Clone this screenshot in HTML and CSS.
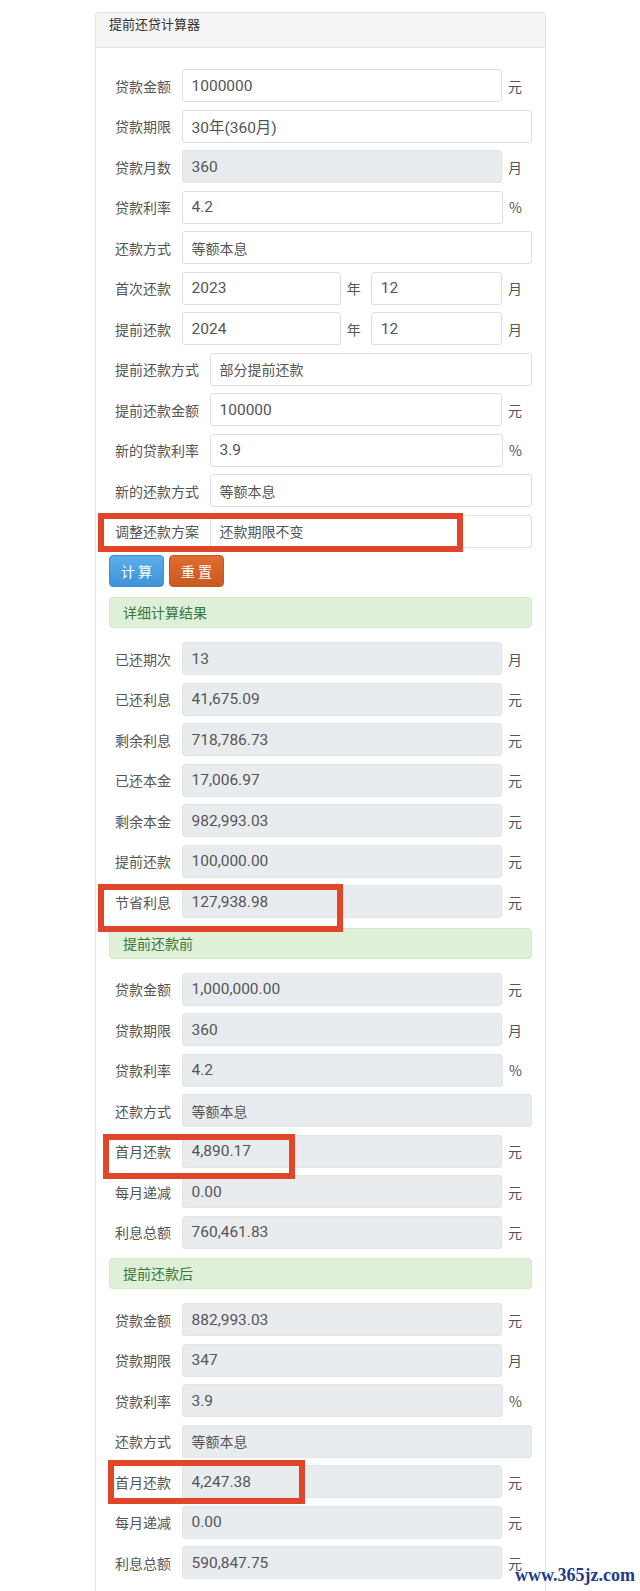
FILE: index.html
```html
<!DOCTYPE html>
<html lang="zh-CN">
  <head>
    <meta charset="UTF-8" />
    <meta name="viewport" content="width=device-width, initial-scale=1.0" />
    <title>提前还贷计算器</title>
    <link rel="stylesheet" href="styles.css">
  </head>
  <body>
    <div class="page">
      <div class="panel">
        <div class="panel-heading">提前还贷计算器</div>
        <div class="panel-body">
          <div class="row"><label class="lbl">贷款金额</label><input class="field" value="1000000"><span class="unit">元</span></div>
          <div class="row"><label class="lbl">贷款期限</label><input class="field" value="30年(360月)"></div>
          <div class="row"><label class="lbl">贷款月数</label><input class="field locked" value="360" readonly><span class="unit">月</span></div>
          <div class="row"><label class="lbl">贷款利率</label><input class="field" value="4.2"><span class="unit">%</span></div>
          <div class="row"><label class="lbl">还款方式</label><input class="field cjk" value="等额本息"></div>
          <div class="row"><label class="lbl">首次还款</label><input class="field year" value="2023"><span class="unit">年</span><input class="field month" value="12"><span class="unit">月</span></div>
          <div class="row"><label class="lbl">提前还款</label><input class="field year" value="2024"><span class="unit">年</span><input class="field month" value="12"><span class="unit">月</span></div>
          <div class="row"><label class="lbl">提前还款方式</label><input class="field cjk" value="部分提前还款"></div>
          <div class="row"><label class="lbl">提前还款金额</label><input class="field" value="100000"><span class="unit">元</span></div>
          <div class="row"><label class="lbl">新的贷款利率</label><input class="field" value="3.9"><span class="unit">%</span></div>
          <div class="row"><label class="lbl">新的还款方式</label><input class="field cjk" value="等额本息"></div>
          <div class="row"><label class="lbl">调整还款方案</label><input class="field cjk" value="还款期限不变"></div>

          <div class="btns">
            <button class="btn btn-calc">计 算</button>
            <button class="btn btn-reset">重 置</button>
          </div>

          <div class="alert">详细计算结果</div>
          <div class="row"><label class="lbl">已还期次</label><input class="field locked" value="13" readonly><span class="unit">月</span></div>
          <div class="row"><label class="lbl">已还利息</label><input class="field locked" value="41,675.09" readonly><span class="unit">元</span></div>
          <div class="row"><label class="lbl">剩余利息</label><input class="field locked" value="718,786.73" readonly><span class="unit">元</span></div>
          <div class="row"><label class="lbl">已还本金</label><input class="field locked" value="17,006.97" readonly><span class="unit">元</span></div>
          <div class="row"><label class="lbl">剩余本金</label><input class="field locked" value="982,993.03" readonly><span class="unit">元</span></div>
          <div class="row"><label class="lbl">提前还款</label><input class="field locked" value="100,000.00" readonly><span class="unit">元</span></div>
          <div class="row"><label class="lbl">节省利息</label><input class="field locked" value="127,938.98" readonly><span class="unit">元</span></div>

          <div class="alert">提前还款前</div>
          <div class="row"><label class="lbl">贷款金额</label><input class="field locked" value="1,000,000.00" readonly><span class="unit">元</span></div>
          <div class="row"><label class="lbl">贷款期限</label><input class="field locked" value="360" readonly><span class="unit">月</span></div>
          <div class="row"><label class="lbl">贷款利率</label><input class="field locked" value="4.2" readonly><span class="unit">%</span></div>
          <div class="row"><label class="lbl">还款方式</label><input class="field locked cjk" value="等额本息" readonly></div>
          <div class="row"><label class="lbl">首月还款</label><input class="field locked" value="4,890.17" readonly><span class="unit">元</span></div>
          <div class="row"><label class="lbl">每月递减</label><input class="field locked" value="0.00" readonly><span class="unit">元</span></div>
          <div class="row"><label class="lbl">利息总额</label><input class="field locked" value="760,461.83" readonly><span class="unit">元</span></div>

          <div class="alert">提前还款后</div>
          <div class="row"><label class="lbl">贷款金额</label><input class="field locked" value="882,993.03" readonly><span class="unit">元</span></div>
          <div class="row"><label class="lbl">贷款期限</label><input class="field locked" value="347" readonly><span class="unit">月</span></div>
          <div class="row"><label class="lbl">贷款利率</label><input class="field locked" value="3.9" readonly><span class="unit">%</span></div>
          <div class="row"><label class="lbl">还款方式</label><input class="field locked cjk" value="等额本息" readonly></div>
          <div class="row"><label class="lbl">首月还款</label><input class="field locked" value="4,247.38" readonly><span class="unit">元</span></div>
          <div class="row"><label class="lbl">每月递减</label><input class="field locked" value="0.00" readonly><span class="unit">元</span></div>
          <div class="row"><label class="lbl">利息总额</label><input class="field locked" value="590,847.75" readonly><span class="unit">元</span></div>
        </div>
      </div>

      <!-- red highlight boxes drawn over the screenshot -->
      <div class="mark mark-1"></div>
      <div class="mark mark-2"></div>
      <div class="mark mark-3"></div>
      <div class="mark mark-4"></div>

      <div class="watermark">www.365jz.com</div>
    </div>
  </body>
</html>
```

FILE: styles.css
```css
* {
  margin: 0;
  padding: 0;
  box-sizing: border-box;
}
body {
  background-color: #fff;
  font-family: "Noto Sans CJK SC", sans-serif;
  color: #555;
}
.page {
  position: relative;
  padding-top: 12px;
}
.panel {
  width: 451px;
  margin-left: 95px;
  border: 1px solid #e4e4e4;
  border-bottom: none;
  border-radius: 4px 4px 0 0;
}
.panel-heading {
  height: 35px;
  padding: 2px 13px 0;
  background-color: #f5f5f5;
  border-bottom: 1px solid #e4e4e4;
  font-size: 13px;
  line-height: 18px;
  color: #333;
}
.panel-body {
  padding: 21px 13px 30px;
}
.row {
  display: flex;
  align-items: center;
  height: 33px;
  margin-bottom: 7.5px;
}
.lbl {
  padding: 0 10.5px 0 6px;
  font-size: 14px;
  white-space: nowrap;
  color: #555;
}
.field {
  flex: 1;
  min-width: 0;
  width: 0;
  height: 33px;
  padding: 0 9px;
  border: 1px solid #dcdfe3;
  border-radius: 3px;
  outline: none;
  background-color: #fff;
  font-family: Roboto, "Noto Sans CJK SC", sans-serif;
  font-size: 15.5px;
  color: #555;
}
.field.cjk {
  font-size: 14px;
}
.field.locked {
  background-color: #e9ecef;
  border-color: #e2e5e8;
}
.field.year {
  flex: 5;
}
.field.month {
  flex: 4;
}
.unit {
  padding: 0 10px 0 6px;
  font-size: 14px;
  color: #555;
}
.btns {
  display: flex;
  gap: 5px;
  margin-bottom: 10px;
}
.btn {
  width: 55px;
  height: 32px;
  border-radius: 4px;
  font-family: "Noto Sans CJK SC", sans-serif;
  font-size: 14px;
  color: #fff;
  cursor: pointer;
}
.btn-calc {
  background: linear-gradient(#5caeea, #3f93d8);
  border: 1px solid #3d8fd2;
}
.btn-reset {
  background: linear-gradient(#e06c31, #c95a21);
  border: 1px solid #c4561f;
}
/* margins collapse with the row above */
.alert {
  height: 31px;
  margin: 9.5px 0 14px;
  padding-left: 13px;
  background-color: #dff0d8;
  border: 1px solid #d6e9c6;
  border-radius: 4px;
  font-size: 14px;
  line-height: 29px;
  color: #3c763d;
}
.mark {
  position: absolute;
  border: 6.5px solid #e1462b;
}
.mark-1 {
  left: 98px;
  top: 513px;
  width: 365px;
  height: 39px;
}
.mark-2 {
  left: 98px;
  top: 884px;
  width: 245px;
  height: 48px;
}
.mark-3 {
  left: 103px;
  top: 1134px;
  width: 192px;
  height: 45px;
}
.mark-4 {
  left: 108px;
  top: 1460px;
  width: 197px;
  height: 44px;
}
.watermark {
  position: absolute;
  left: 515px;
  top: 1565px;
  font-family: "Liberation Serif", serif;
  font-weight: bold;
  font-size: 18px;
  color: #1b3d8c;
}
```
